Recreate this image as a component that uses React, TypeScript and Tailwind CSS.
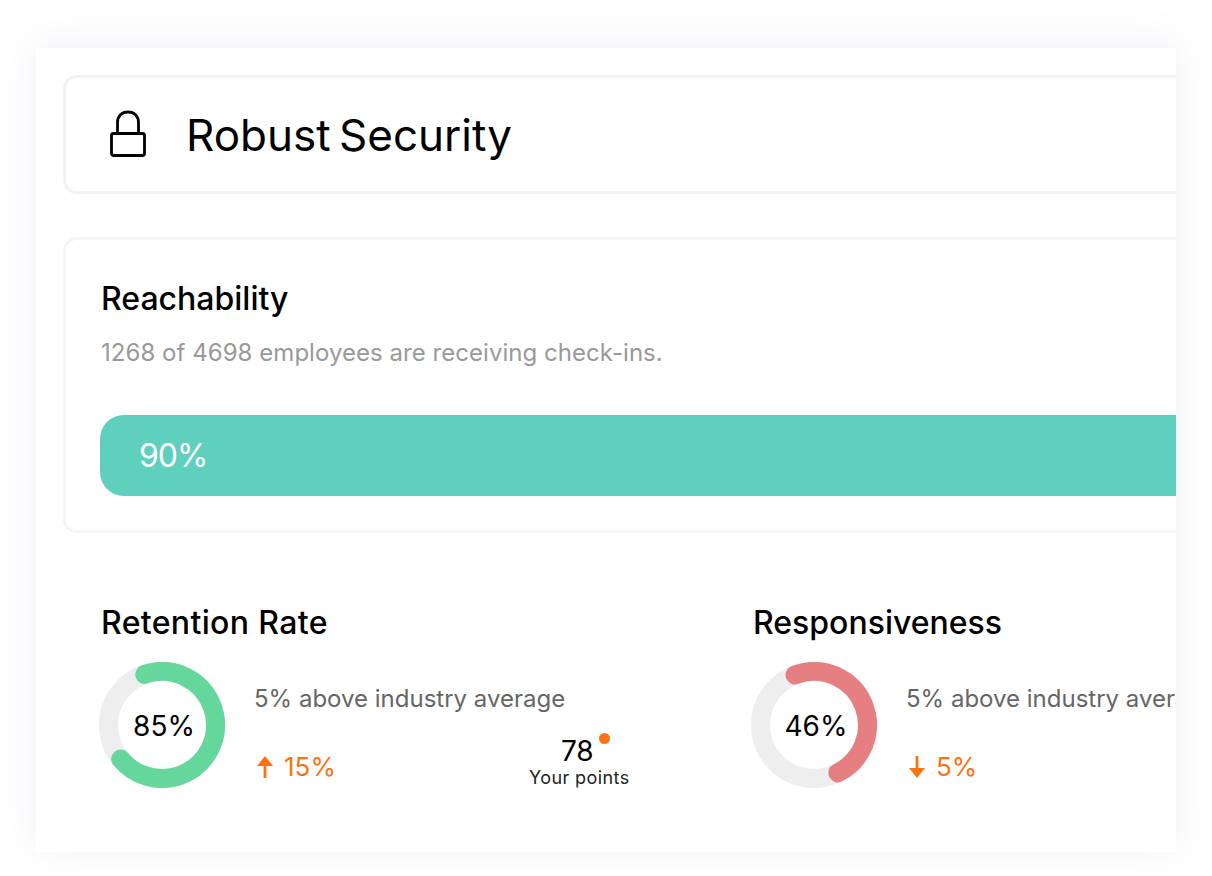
const font = "font-['Inter',sans-serif]";

function Ring({ start, sweep, color, label }: { start: number; sweep: number; color: string; label: string }) {
  return (
    <div className="relative w-[126px] h-[126px] shrink-0 -ml-[2px] flex items-center justify-center">
      <svg className="absolute inset-0" width="126" height="126" viewBox="0 0 126 126" fill="none">
        <circle cx="63" cy="63" r="53.5" stroke="#eeeeee" strokeWidth="19" />
        <circle
          cx="63"
          cy="63"
          r="53.5"
          stroke={color}
          strokeWidth="19"
          strokeLinecap="round"
          pathLength={360}
          strokeDasharray={`${sweep} 360`}
          transform={`rotate(${start} 63 63)`}
        />
      </svg>
      <span className="relative ml-[4px] mt-[2px] text-[28px] leading-none text-black">{label}</span>
    </div>
  );
}

function Arrow({ down }: { down?: boolean }) {
  return (
    <svg width="16" height="22" viewBox="0 0 16 22" className={down ? "rotate-180" : ""} fill="#f97316">
      <path d="M8 0 L16 10 H9.400 V22 H6.600 V10 H0 Z" />
    </svg>
  );
}

function Metric({
  title,
  ring,
  trend,
  down,
  titleClass,
}: {
  title: string;
  ring: React.ReactNode;
  trend: string;
  down?: boolean;
  titleClass?: string;
}) {
  return (
    <div className="w-[652px] shrink-0">
      <h3 className={`text-[32px] leading-[40px] text-black font-medium ${titleClass ?? ""}`}>{title}</h3>
      <div className="mt-[19px] flex gap-[29px]">
        {ring}
        <div className="pt-[22px] whitespace-nowrap">
          <p className="text-[24px] leading-[30px] text-[#666666]">5% above industry average</p>
          <div className="mt-[38px] ml-[3px] flex items-center gap-[11px] text-[26px] leading-[30px] text-[#f97316]">
            <Arrow down={down} />
            <span>{trend}</span>
          </div>
        </div>
      </div>
    </div>
  );
}

export default function App() {
  return (
    <div className={`${font} w-[1212px] h-[876px] bg-white pt-[48px] px-[36px] overflow-hidden`}>
      <div className="relative h-[804px] bg-white shadow-[0_-4px_36px_rgba(120,135,180,0.12)] overflow-hidden pl-[27px] pt-[27px]">
        <div className="w-[1200px] h-[119px] border-[3px] border-[#f2f2f2] rounded-[14px] flex items-center pl-[43px] gap-[39px]">
          <svg className="-mt-[2px]" width="38" height="48" viewBox="0 0 38 48" fill="none" stroke="#000" strokeWidth="2.8" strokeLinejoin="round">
            <rect x="2.5" y="23.5" width="33" height="22" rx="2" />
            <path d="M8.5 23.5 V12.5 C8.5 6 13 2 19 2 C25 2 29.500 6 29.500 12.5 V23.500" />
          </svg>
          <h2 className="text-[44px] leading-none text-black [word-spacing:-4px]">Robust Security</h2>
        </div>

        <div className="mt-[43px] w-[1200px] h-[296px] border-[3px] border-[#f5f5f5] rounded-[14px] pl-[35px] pt-[39px]">
          <h3 className="text-[32px] leading-[40px] text-black font-medium">Reachability</h3>
          <p className="mt-[19px] text-[24px] leading-[30px] text-[#999999] tracking-[0.04px]">1268 of 4698 employees are receiving check-ins.</p>
          <div className="mt-[47px] -ml-[1px] h-[81px] bg-[#5fcfbe] rounded-l-[24px] flex items-center pl-[39px] text-[32px] tracking-[-1px] text-white">90%</div>
        </div>

        <div className="mt-[70px] pl-[38px] flex">
          <Metric title="Retention Rate" titleClass="tracking-[0.35px]" trend="15%" ring={<Ring start={-108.8} sweep={249.3} color="#65d69c" label="85%" />} />
          <Metric title="Responsiveness" trend="5%" down ring={<Ring start={-110.8} sweep={174.2} color="#e67f81" label="46%" />} />
        </div>

        <div className="absolute left-[493px] top-[687px] flex flex-col items-center text-black">
          <div className="pr-[4px]">
            <div className="relative text-[28px] leading-[32px]">
              78
              <span className="absolute -right-[16px] -top-[2px] w-[11px] h-[11px] rounded-full bg-[#f97316]" />
            </div>
          </div>
          <span className="text-[18px] leading-[22px] tracking-[0.4px] text-[#222222]">Your points</span>
        </div>
      </div>
    </div>
  );
}
